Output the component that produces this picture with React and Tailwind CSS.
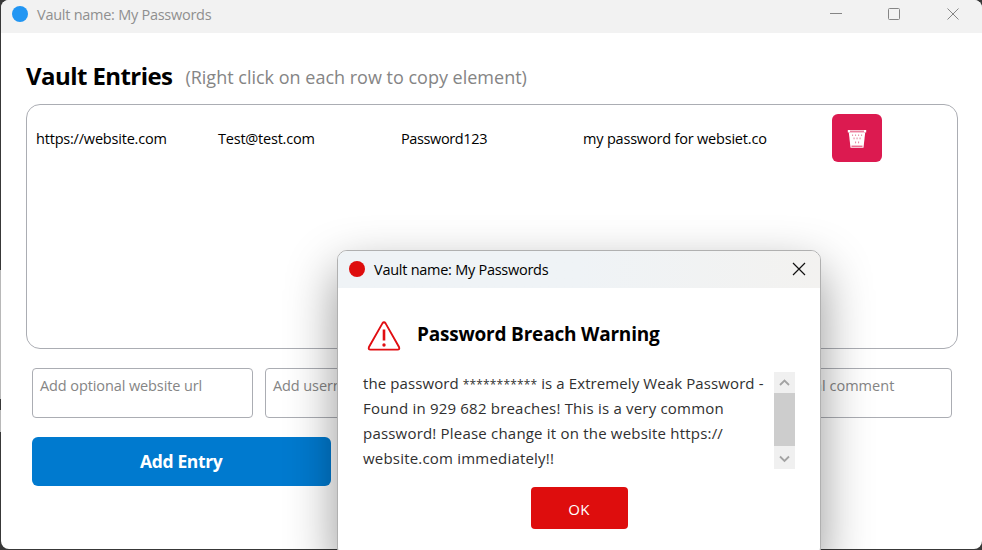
const font = "font-['Open_Sans','Noto_Sans',sans-serif]";

function TrashIcon() {
  return (
    <svg className="mt-[2px]" width="20" height="20" viewBox="0 0 20 20" fill="none">
      <path d="M.8 1.100h18.400v2.500H.8z" fill="white" />
      <path d="M3 2.200h14" stroke="#dc1a50" strokeWidth=".8" />
      <path d="M1.800 3.500h16.400l-1.700 15.300H3.500z" fill="white" />
      <path d="M4.500 17.200h11" stroke="#dc1a50" strokeWidth=".9" />
      <g fill="#e88aa5">
        <rect x="5" y="5.500" width="1.100" height="1.400" /><rect x="8" y="5.500" width="1.100" height="1.400" />
        <rect x="11" y="5.500" width="1.100" height="1.400" /><rect x="14" y="5.500" width="1.100" height="1.400" />
        <rect x="6.500" y="8.500" width="1.100" height="1.800" /><rect x="9.500" y="8.500" width="1.100" height="1.800" />
        <rect x="12.500" y="8.500" width="1.100" height="1.800" />
        <rect x="8" y="12.500" width="1.100" height="1.800" /><rect x="11" y="12.500" width="1.100" height="1.800" />
      </g>
    </svg>
  );
}

function MainWindow() {
  return (
    <div className="flex h-[549px] w-[981px] flex-col overflow-hidden rounded-[8px] bg-white">
      <header className="flex h-[33px] shrink-0 items-center bg-[#f2f2f2] pb-[5px] pl-[11px]">
        <span className="size-4 rounded-full bg-[#2296f3]" />
        <span className="ml-[9px] flex-1 whitespace-nowrap pt-[2px] text-[14.5px] leading-5 tracking-[-0.26px] text-[#8f8f8f]">Vault name: My Passwords</span>
        <svg className="mr-[22px] h-4 w-[130px]" viewBox="0 0 130 16" fill="none" stroke="#858585">
          <path d="M0 7.500h12" />
          <rect x="58.500" y="2.500" width="11" height="11" rx="1" />
          <path d="M117.500 2.500l11 11m0-11l-11 11" />
        </svg>
      </header>
      <main className="flex flex-1 flex-col pl-[25px]">
        <div className="flex h-[71px] items-start whitespace-nowrap pt-[26px]">
          <h1 className="text-[24px] font-bold leading-[34px] tracking-[-0.57px] text-black">Vault Entries</h1>
          <p className="ml-[13px] pt-[6px] text-[18px] leading-6 text-[#858585]">(Right click on each row to copy element)</p>
        </div>
        <section className="h-[245px] w-[932px] rounded-[14px] border border-[#abadb3] pl-[9px] pt-[9px]">
          <div className="flex h-12 items-center whitespace-nowrap text-[14.5px] tracking-[-0.19px] text-black">
            <div className="w-[182px] pt-px tracking-[-0.2px]">https://website.com</div>
            <div className="w-[183px] pt-px tracking-[-0.22px]">Test@test.com</div>
            <div className="w-[182px] pt-px tracking-[-0.38px]">Password123</div>
            <div className="w-[249px] pt-px">my password for websiet.co</div>
            <button className="flex h-12 w-[50px] items-center justify-center rounded-[6px] bg-[#dc1a50]">
              <TrashIcon />
            </button>
          </div>
        </section>
        <div className="mt-[19px] flex gap-3 whitespace-nowrap pl-[6px] text-[14.5px] leading-5 tracking-[-0.1px] text-[#858585]">
          <div className="h-[50px] w-[221px] rounded-[4px] border border-[#abadb3] pl-[7px] pt-[7px]">Add optional website url</div>
          <div className="h-[50px] w-[221px] rounded-[4px] border border-[#abadb3] pl-[7px] pt-[7px]">Add username</div>
          <div className="h-[50px] w-[221px] rounded-[4px] border border-[#abadb3] pl-[7px] pt-[7px]">Add password</div>
          <div className="h-[50px] w-[221px] rounded-[4px] border border-[#abadb3] pl-[7px] pt-[7px] tracking-[0.02px]">Add optional comment</div>
        </div>
        <button className="ml-[6px] mt-[19px] h-[48.5px] w-[298.5px] rounded-[6px] bg-[#007acf] text-[17.500px] font-bold tracking-[-0.35px] text-white">Add Entry</button>
      </main>
    </div>
  );
}

function BreachDialog() {
  return (
    <section className="absolute left-[337px] top-[250px] flex h-[308px] w-[484px] flex-col overflow-hidden rounded-[10px] border border-[#b0b0b0] bg-white shadow-[0_20px_50px_rgba(0,0,0,0.42)]">
      <header className="flex h-[37px] shrink-0 items-center bg-linear-to-r from-[#eff3f6] via-[#eff3f6] to-[#f3f2f0] pb-px pl-[11px]">
        <span className="size-4 rounded-full bg-[#de0d0d]" />
        <span className="ml-[9px] flex-1 whitespace-nowrap pt-[2px] text-[14.5px] leading-5 tracking-[-0.26px] text-black">Vault name: My Passwords</span>
        <svg className="mr-[14px] size-[14px]" viewBox="0 0 14 14" fill="none" stroke="#111" strokeWidth="1.200"><path d="M1 1l12 12M13 1L1 13" /></svg>
      </header>
      <div className="flex h-[83px] shrink-0 items-center whitespace-nowrap pl-[29px] pt-[9px]">
        <svg className="mt-[4px]" width="34" height="30" viewBox="0 0 34 30" fill="none" stroke="#e10e12" strokeWidth="1.900">
          <path d="M15.400 2.400Q17 .2 18.600 2.400L32 26Q33 28.600 30.500 28.600H3.500Q1 28.600 2 26Z" />
          <path d="M17 8.500V19.500" strokeWidth="2.600" />
          <circle cx="17" cy="24" r="1.700" fill="#e10e12" stroke="none" />
        </svg>
        <h2 className="ml-[16px] text-[19px] font-bold tracking-[-0.2px] text-black">Password Breach Warning</h2>
      </div>
      <div className="flex pl-[25px]">
        <p className="w-[411px] whitespace-nowrap text-[15px] leading-[25px] tracking-[0.2px] text-[#303030]">
          <span className="tracking-[0.1px]">the password <span className="text-[12px] leading-none tracking-[0.15px]">***********</span> is a Extremely Weak Password -</span><br />
          Found in 929 682 breaches! This is a very common<br />
          password! Please change it on the website https://<br />
          website.com immediately!!
        </p>
        <div className="mt-px flex h-[97px] w-[21px] flex-col bg-[#f0f0f0]">
          <svg width="21" height="21" viewBox="0 0 21 21" fill="none" stroke="#a3a3a3" strokeWidth="1.800"><path d="M6 13l4.500-4.500L15 13" /></svg>
          <div className="h-[53px] bg-[#cdcdcd]" />
          <svg width="21" height="23" viewBox="0 0 21 23" fill="none" stroke="#a3a3a3" strokeWidth="1.800"><path d="M6 10.500l4.500 4.500 4.500-4.500" /></svg>
        </div>
      </div>
      <button className="ml-[192.5px] mt-[16px] h-[42px] w-[97px] rounded-[4px] bg-[#de0d0d] pt-[3px] text-[15px] tracking-[0.3px] text-white">OK</button>
    </section>
  );
}

export default function App() {
  return (
    <div className={`relative h-[550px] w-[982px] overflow-hidden bg-[#383838] bg-[linear-gradient(#383838_270px,#b8b8b8_270px,#b8b8b8_399px,#383838_399px,#383838_410px,#b8b8b8_410px,#b8b8b8_432px,#383838_432px)] bg-[length:2px_550px] bg-no-repeat pl-px antialiased ${font}`}>
      <MainWindow />
      <BreachDialog />
    </div>
  );
}
